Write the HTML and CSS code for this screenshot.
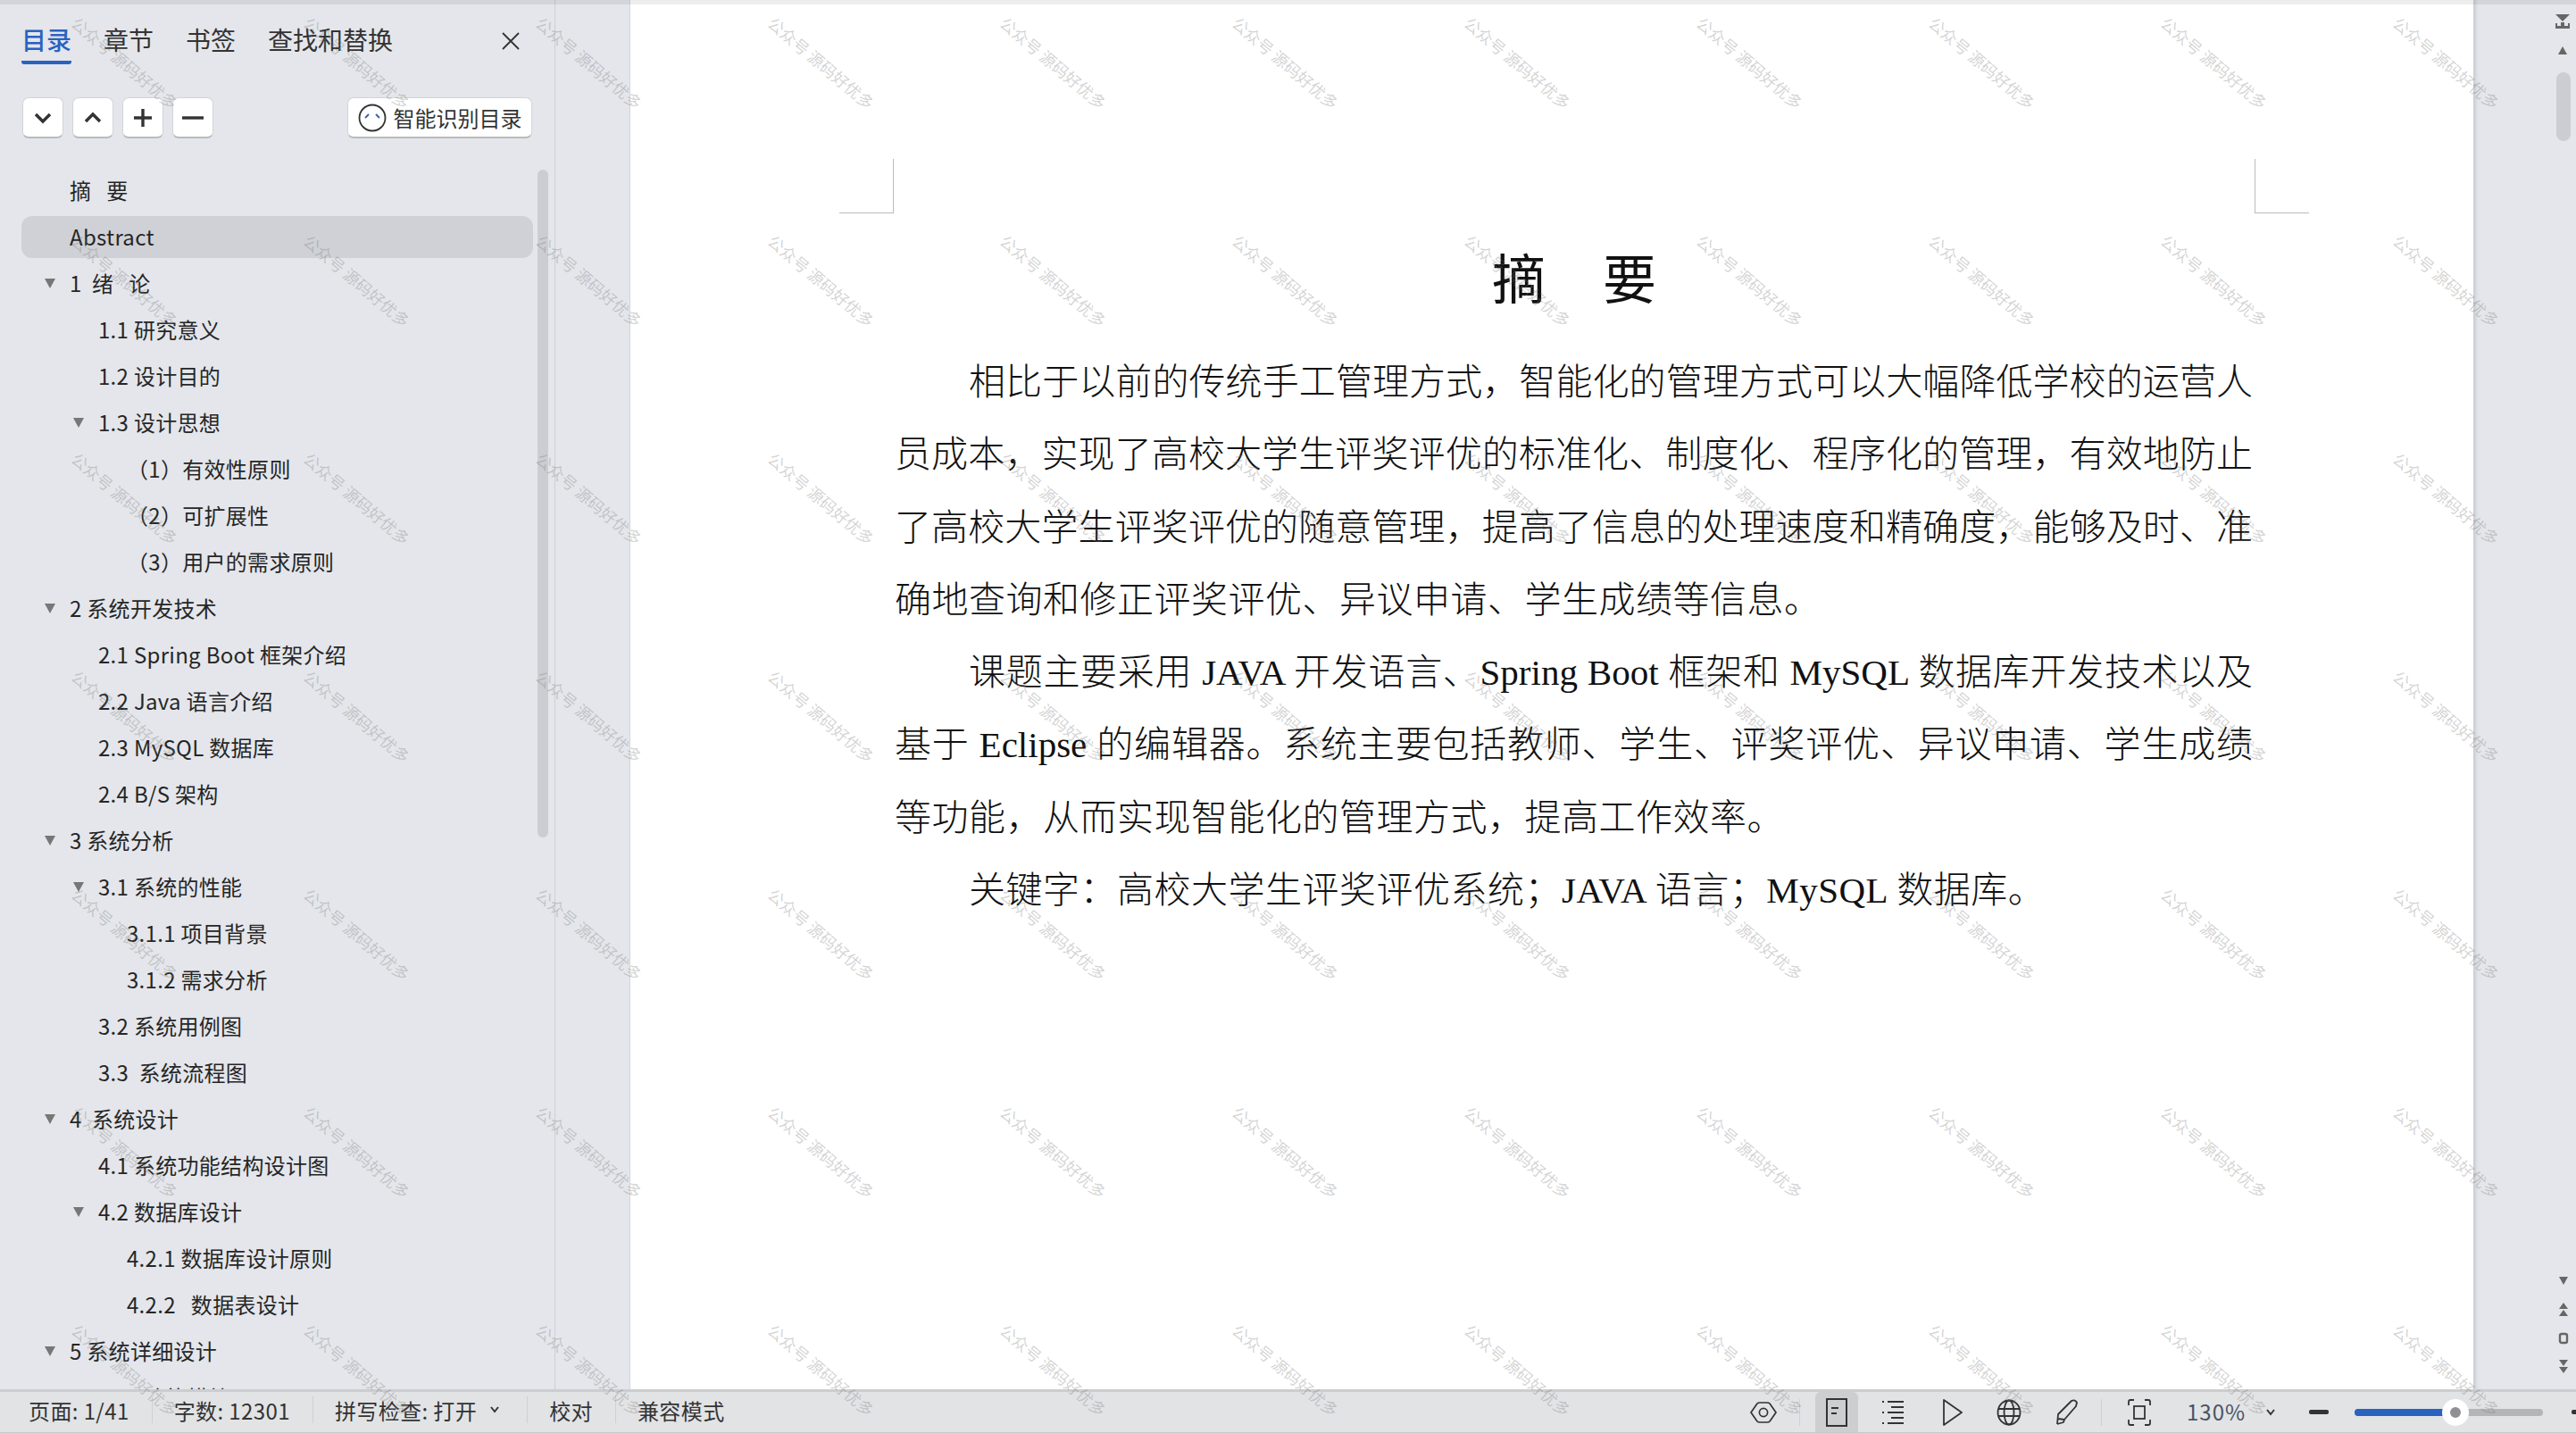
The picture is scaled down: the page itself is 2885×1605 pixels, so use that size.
FILE: index.html
```html
<!DOCTYPE html>
<html lang="zh-CN">
<head>
    <meta charset="UTF-8">
    <title>目录</title>
    <link rel="stylesheet" href="styles.css">
</head>
<body>
    <div class="main">
        <div class="nav">
            <div class="tabs">
                <span class="tab active">目录</span>
                <span class="tab">章节</span>
                <span class="tab">书签</span>
                <span class="tab">查找和替换</span>
                <svg class="close" width="22" height="22" viewBox="0 0 22 22"><path d="M2 2L20 20M20 2L2 20" stroke="#333" stroke-width="1.8" fill="none"/></svg>
            </div>
            <div class="tools">
                <span class="btn"><svg width="20" height="20" viewBox="0 0 20 20"><path d="M2 6L10 14L18 6" stroke="#333" stroke-width="3.4" fill="none"/></svg></span>
                <span class="btn"><svg width="20" height="20" viewBox="0 0 20 20"><path d="M2 14L10 6L18 14" stroke="#333" stroke-width="3.4" fill="none"/></svg></span>
                <span class="btn"><svg width="20" height="20" viewBox="0 0 20 20"><path d="M10 0V20M0 10H20" stroke="#333" stroke-width="3.4" fill="none"/></svg></span>
                <span class="btn"><svg width="24" height="20" viewBox="0 0 24 20"><path d="M0 10H24" stroke="#333" stroke-width="3.4" fill="none"/></svg></span>
                <span class="btn smart">
                    <svg width="32" height="32" viewBox="0 0 32 32"><circle cx="16" cy="16" r="14.5" stroke="#333" stroke-width="1.8" fill="#fff"/><path d="M8 16L12 12M24 16L20 12" stroke="#3b5ea8" stroke-width="1.8" fill="none"/></svg>
                    智能识别目录
                </span>
            </div>
            <div class="tree-wrap">
                <ul class="tree">
                    <li class="row"><i class="caret none"></i>摘&nbsp;&nbsp;&nbsp;要</li>
                    <li class="row current"><i class="caret none"></i>Abstract</li>
                    <li class="row"><i class="caret"></i>1&nbsp;&nbsp;绪&nbsp;&nbsp;&nbsp;论</li>
                    <li class="row lv1"><i class="caret none"></i>1.1 研究意义</li>
                    <li class="row lv1"><i class="caret none"></i>1.2 设计目的</li>
                    <li class="row lv1"><i class="caret"></i>1.3 设计思想</li>
                    <li class="row lv3"><i class="caret none"></i>（1）有效性原则</li>
                    <li class="row lv3"><i class="caret none"></i>（2）可扩展性</li>
                    <li class="row lv3"><i class="caret none"></i>（3）用户的需求原则</li>
                    <li class="row"><i class="caret"></i>2 系统开发技术</li>
                    <li class="row lv1"><i class="caret none"></i>2.1 Spring Boot 框架介绍</li>
                    <li class="row lv1"><i class="caret none"></i>2.2 Java 语言介绍</li>
                    <li class="row lv1"><i class="caret none"></i>2.3 MySQL 数据库</li>
                    <li class="row lv1"><i class="caret none"></i>2.4 B/S 架构</li>
                    <li class="row"><i class="caret"></i>3 系统分析</li>
                    <li class="row lv1"><i class="caret"></i>3.1 系统的性能</li>
                    <li class="row lv2"><i class="caret none"></i>3.1.1 项目背景</li>
                    <li class="row lv2"><i class="caret none"></i>3.1.2 需求分析</li>
                    <li class="row lv1"><i class="caret none"></i>3.2 系统用例图</li>
                    <li class="row lv1"><i class="caret none"></i>3.3&nbsp;&nbsp;系统流程图</li>
                    <li class="row"><i class="caret"></i>4&nbsp;&nbsp;系统设计</li>
                    <li class="row lv1"><i class="caret none"></i>4.1 系统功能结构设计图</li>
                    <li class="row lv1"><i class="caret"></i>4.2 数据库设计</li>
                    <li class="row lv2"><i class="caret none"></i>4.2.1 数据库设计原则</li>
                    <li class="row lv2"><i class="caret none"></i>4.2.2&nbsp;&nbsp;&nbsp;数据表设计</li>
                    <li class="row"><i class="caret"></i>5 系统详细设计</li>
                    <li class="row lv1"><i class="caret none"></i>5.1&nbsp;&nbsp;&nbsp;功能模块</li>
                </ul>
                <div class="tree-scroll"></div>
            </div>
        </div>
        <div class="gutter"></div>
        <div class="doc">
            <div class="marks">
                <span class="mark mark-l"></span>
                <span class="mark mark-r"></span>
            </div>
            <h1 class="title">摘　要</h1>
            <div class="text">
                <span class="line first">相比于以前的传统手工管理方式，智能化的管理方式可以大幅降低学校的运营人</span>
                <span class="line">员成本，实现了高校大学生评奖评优的标准化、制度化、程序化的管理，有效地防止</span>
                <span class="line">了高校大学生评奖评优的随意管理，提高了信息的处理速度和精确度，能够及时、准</span>
                <span class="line end">确地查询和修正评奖评优、异议申请、学生成绩等信息。</span>
                <span class="line first">课题主要采用 JAVA 开发语言、Spring Boot 框架和 MySQL 数据库开发技术以及</span>
                <span class="line">基于 Eclipse 的编辑器。系统主要包括教师、学生、评奖评优、异议申请、学生成绩</span>
                <span class="line end">等功能，从而实现智能化的管理方式，提高工作效率。</span>
                <span class="line first end">关键字：高校大学生评奖评优系统；JAVA 语言；MySQL 数据库。</span>
            </div>
        </div>
        <div class="rail">
            <svg class="rail-top" width="18" height="46" viewBox="0 0 18 46">
                <path d="M1 0H17L9 8Z" fill="#666"/>
                <path d="M1 16V10H3V13H7V9H11V13H15V10H17V16Z" fill="#666"/>
                <path d="M4 45L9 36L14 45Z" fill="#666"/>
            </svg>
            <div class="rail-thumb"></div>
            <svg class="rail-bottom" width="16" height="108" viewBox="0 0 16 108">
                <path d="M3 0H13L8 9Z" fill="#666"/>
                <path d="M8 29L13 36H3ZM8 37L13 44H3Z" fill="#666"/>
                <rect x="4" y="64" width="8" height="10" rx="2" stroke="#666" stroke-width="2.4" fill="none"/>
                <path d="M3 93H13L8 100ZM3 101H13L8 108Z" fill="#666"/>
            </svg>
        </div>
    </div>
    <div class="status">
        <span class="cell">页面: 1/41</span>
        <span class="cell">字数: 12301</span>
        <span class="cell spell">拼写检查: 打开 <svg class="tiny" width="10" height="8" viewBox="0 0 10 8"><path d="M1 1L5 6L9 1" stroke="#333" stroke-width="2" fill="none"/></svg></span>
        <span class="cell">校对</span>
        <span class="cell last">兼容模式</span>
        <div class="status-right">
            <svg class="ico eye" width="30" height="24" viewBox="0 0 30 24"><path d="M1 12L8 2Q9 1 11 1H19Q21 1 22 2L29 12L22 22Q21 23 19 23H11Q9 23 8 22Z" stroke="#333" stroke-width="1.7" fill="none" stroke-linejoin="round"/><circle cx="15" cy="12" r="4.6" stroke="#333" stroke-width="1.7" fill="none"/></svg>
            <span class="vsep"></span>
            <span class="view-on"><svg width="24" height="32" viewBox="0 0 24 32"><rect x="1" y="1" width="22" height="30" stroke="#333" stroke-width="2" fill="none"/><path d="M6 11H14M6 17H12" stroke="#333" stroke-width="2"/></svg></span>
            <svg class="ico outline" width="26" height="28" viewBox="0 0 26 28"><path d="M7 2H25M7 14H25M7 26H25M1 2H3M1 14H3M1 26H3M11 8H25M11 20H25" stroke="#333" stroke-width="2" fill="none"/></svg>
            <svg class="ico play" width="22" height="30" viewBox="0 0 22 30"><path d="M1 1L21 15L1 29Z" stroke="#333" stroke-width="1.8" fill="none" stroke-linejoin="round"/></svg>
            <svg class="ico globe" width="28" height="30" viewBox="0 0 28 30"><ellipse cx="14" cy="15" rx="12.5" ry="13.5" stroke="#333" stroke-width="1.8" fill="none"/><ellipse cx="14" cy="15" rx="5.5" ry="13.5" stroke="#333" stroke-width="1.8" fill="none"/><path d="M2 11H26M2 19H26" stroke="#333" stroke-width="1.8"/></svg>
            <svg class="ico pen" width="28" height="30" viewBox="0 0 28 30"><path d="M3 28L4 17L19 2Q23 0 25 4L24 8L11 23L4 22M3 28L10 26L11 23" stroke="#333" stroke-width="1.8" fill="none" stroke-linejoin="round"/></svg>
            <span class="vsep second"></span>
            <svg class="ico fit" width="26" height="30" viewBox="0 0 26 30"><path d="M7 1H3Q1 1 1 3V7M19 1H23Q25 1 25 3V7M7 29H3Q1 29 1 27V23M19 29H23Q25 29 25 27V23" stroke="#333" stroke-width="1.8" fill="none"/><rect x="7" y="8" width="12" height="14" stroke="#333" stroke-width="1.8" fill="none"/></svg>
            <span class="zoom-val">130%</span>
            <svg class="tiny zoom-caret" width="10" height="8" viewBox="0 0 10 8"><path d="M1 1L5 6L9 1" stroke="#333" stroke-width="2" fill="none"/></svg>
            <span class="minus"></span>
            <div class="slider"><span class="slider-fill"></span><span class="slider-thumb"></span></div>
            <span class="minus plus"></span>
        </div>
    </div>
    <div class="top-shade"></div>
    <div class="marks-layer" id="watermarks"></div>

    <script>
    // watermark repeated over the whole window: 11 columns, 7 rows
    const layer = document.getElementById('watermarks');
    for (let i = 0; i < 77; i++) {
        const mark = document.createElement('span');
        mark.className = 'wm';
        mark.innerText = '公众号 源码好优多';
        layer.appendChild(mark);
    }
    </script>
</body>
</html>
```

FILE: styles.css
```css
* { box-sizing: border-box; }
body, html {
    margin: 0;
    padding: 0;
    width: 2885px;
    height: 1605px;
    overflow: hidden;
    font-family: "Noto Sans CJK SC", "Noto Sans", sans-serif;
    color: #262626;
    background-color: #e4e6eb;
}
body {
    position: relative;
    display: flex;
    flex-direction: column;
}
.main {
    display: flex;
    height: 1556px;
    overflow: hidden;
}

/* left navigation pane */
.nav {
    width: 622px;
    border-right: 1px solid #cdcfd3;
    display: flex;
    flex-direction: column;
}
.tabs {
    display: flex;
    align-items: flex-start;
    gap: 36px;
    padding: 24px 0 0 24px;
    height: 109px;
    position: relative;
}
.tab {
    font-size: 28px;
    line-height: 40px;
    height: 48px;
    color: #333;
}
.tab.active {
    color: #2a62c0;
    font-weight: 500;
    border-bottom: 4px solid #2a62c0;
    border-radius: 0 0 3px 3px;
}
.close {
    margin-left: 85px;
    margin-top: 11px;
}
.tools {
    display: flex;
    gap: 10px;
    padding-left: 25px;
    height: 81px;
}
.btn {
    width: 46px;
    height: 46px;
    background-color: #fff;
    border: 1px solid #d3d4d7;
    border-bottom: 2px solid #b9babd;
    border-radius: 7px;
    display: flex;
    align-items: center;
    justify-content: center;
}
.btn.smart {
    width: 207px;
    margin-left: 140px;
    gap: 8px;
    font-size: 24px;
    color: #333;
}
.tree-wrap {
    flex: 1;
    display: flex;
    overflow: hidden;
}
.tree {
    list-style-type: none;
    margin: 0;
    padding: 0 0 0 24px;
    width: 597px;
}
.row {
    height: 47px;
    margin-bottom: 5px;
    display: flex;
    align-items: center;
    font-size: 24px;
    letter-spacing: 0.3px;
    line-height: 43px;
    padding-left: 26px;
    padding-bottom: 2px;
    white-space: nowrap;
    color: #262626;
}
.row.current {
    background-color: #cfd1d6;
    border-radius: 12px;
}
.row.lv1 { padding-left: 58px; }
.row.lv2 { padding-left: 90px; }
.row.lv3 { padding-left: 90px; }
.caret {
    width: 0;
    height: 0;
    margin-right: 16px;
    margin-top: 1px;
    border-left: 6.5px solid transparent;
    border-right: 6.5px solid transparent;
    border-top: 11px solid #777;
}
.caret.none { visibility: hidden; }
.tree-scroll {
    width: 12px;
    height: 748px;
    margin-left: 5px;
    background-color: #cccdd2;
    border-radius: 6px;
}
.gutter {
    width: 84px;
    border-right: 1px solid #d5d6da;
}

/* document page */
.doc {
    width: 2064px;
    background-color: #fff;
    padding-top: 178px;
}
.marks {
    display: flex;
    justify-content: space-between;
    margin: 0 184px 0 234px;
}
.mark {
    width: 61px;
    height: 61px;
    border-bottom: 1px solid #bbb;
}
.mark-l { border-right: 1px solid #bbb; }
.mark-r { border-left: 1px solid #bbb; }
.title {
    margin: 33px 0 0;
    padding-left: 52px;
    font-size: 60px;
    font-weight: 400;
    line-height: 74px;
    letter-spacing: 2px;
    text-align: center;
    color: #111;
}
.text {
    margin: 42px 0 0 296px;
    width: 1521px;
    font-family: "Liberation Serif", "Noto Sans CJK SC", serif;
    font-size: 41px;
    font-weight: 300;
    line-height: 81.3px;
    color: #111;
}
.line {
    display: block;
    white-space: nowrap;
    text-align: justify;
    text-align-last: justify;
}
.line.first { text-indent: 83px; }
.line.end {
    text-align-last: left;
    letter-spacing: 0.5px;
}

/* right scroll rail */
.rail {
    width: 115px;
    position: relative;
    display: flex;
    flex-direction: column;
    align-items: flex-end;
    padding: 16px 6px 18px 0;
    box-shadow: inset 6px 0 5px -4px #c3c5c9;
}
.rail-thumb {
    width: 16px;
    height: 77px;
    margin-top: 19px;
    background-color: #cccdd2;
    border-radius: 8px;
}
.rail-bottom { margin-top: auto; }

/* status bar */
.status {
    height: 49px;
    display: flex;
    align-items: center;
    background-color: #e2e3e5;
    border-top: 3px solid #cccdcf;
    border-bottom: 1px solid #c8c9cb;
    padding: 0 0 0 32px;
    font-size: 24px;
    color: #333;
}
.cell {
    display: flex;
    align-items: center;
    height: 30px;
    letter-spacing: 0.4px;
    padding-right: 25px;
    margin-right: 24px;
    margin-top: -5px;
    border-right: 1px solid #cfd0d2;
    white-space: nowrap;
}
.cell.spell { padding-right: 31px; }
.cell.last {
    border-right: 0;
}
.tiny { margin-left: 15px; }
.status-right {
    margin-left: auto;
    display: flex;
    align-items: center;
    height: 100%;
    width: 925px;
    flex-shrink: 0;
    overflow: hidden;
    position: relative;
}
.status-right > * { flex-shrink: 0; }
.vsep {
    width: 1px;
    height: 30px;
    background-color: #cfd0d2;
    margin: 0 17px 0 25px;
}
.view-on {
    width: 48px;
    height: 100%;
    background-color: #cdcecf;
    border-radius: 6px 6px 0 0;
    display: flex;
    align-items: center;
    justify-content: center;
}
.outline { margin-left: 26px; }
.play { margin-left: 43px; }
.globe { margin-left: 38px; }
.pen { margin-left: 37px; }
.vsep.second { margin: 0 0 0 24px; }
.fit { margin-left: 29px; }
.zoom-val {
    margin-left: 40px;
    margin-top: -3px;
    letter-spacing: 1px;
    color: #4a5464;
    white-space: nowrap;
}
.zoom-caret { margin-left: 23px; }
.minus {
    width: 22px;
    height: 5px;
    margin-left: 38px;
    background-color: #333;
    border-radius: 2px;
}
.slider {
    width: 211px;
    height: 8px;
    margin-left: 29px;
    background-color: #b4b5b7;
    border-radius: 4px;
    position: relative;
}
.slider-fill {
    display: block;
    width: 113px;
    height: 8px;
    background-color: #2a62c0;
    border-radius: 4px 0 0 4px;
}
.slider-thumb {
    position: absolute;
    left: 98px;
    top: -11px;
    width: 30px;
    height: 30px;
    border-radius: 50%;
    background-color: #8f9093;
    border: 9px solid #fff;
}
.plus { margin-left: 32px; }

/* things lying over the whole window */
.top-shade {
    position: absolute;
    left: 0;
    top: 0;
    width: 100%;
    height: 5px;
    background-color: rgba(0, 0, 0, 0.07);
}
.marks-layer {
    position: absolute;
    left: 10px;
    top: -52px;
    display: grid;
    grid-template-columns: repeat(11, 260px);
    grid-auto-rows: 244px;
    pointer-events: none;
}
.wm {
    align-self: center;
    justify-self: center;
    font-size: 18px;
    line-height: 20px;
    white-space: nowrap;
    color: rgba(120, 120, 120, 0.32);
    transform: rotate(40deg);
}
```
